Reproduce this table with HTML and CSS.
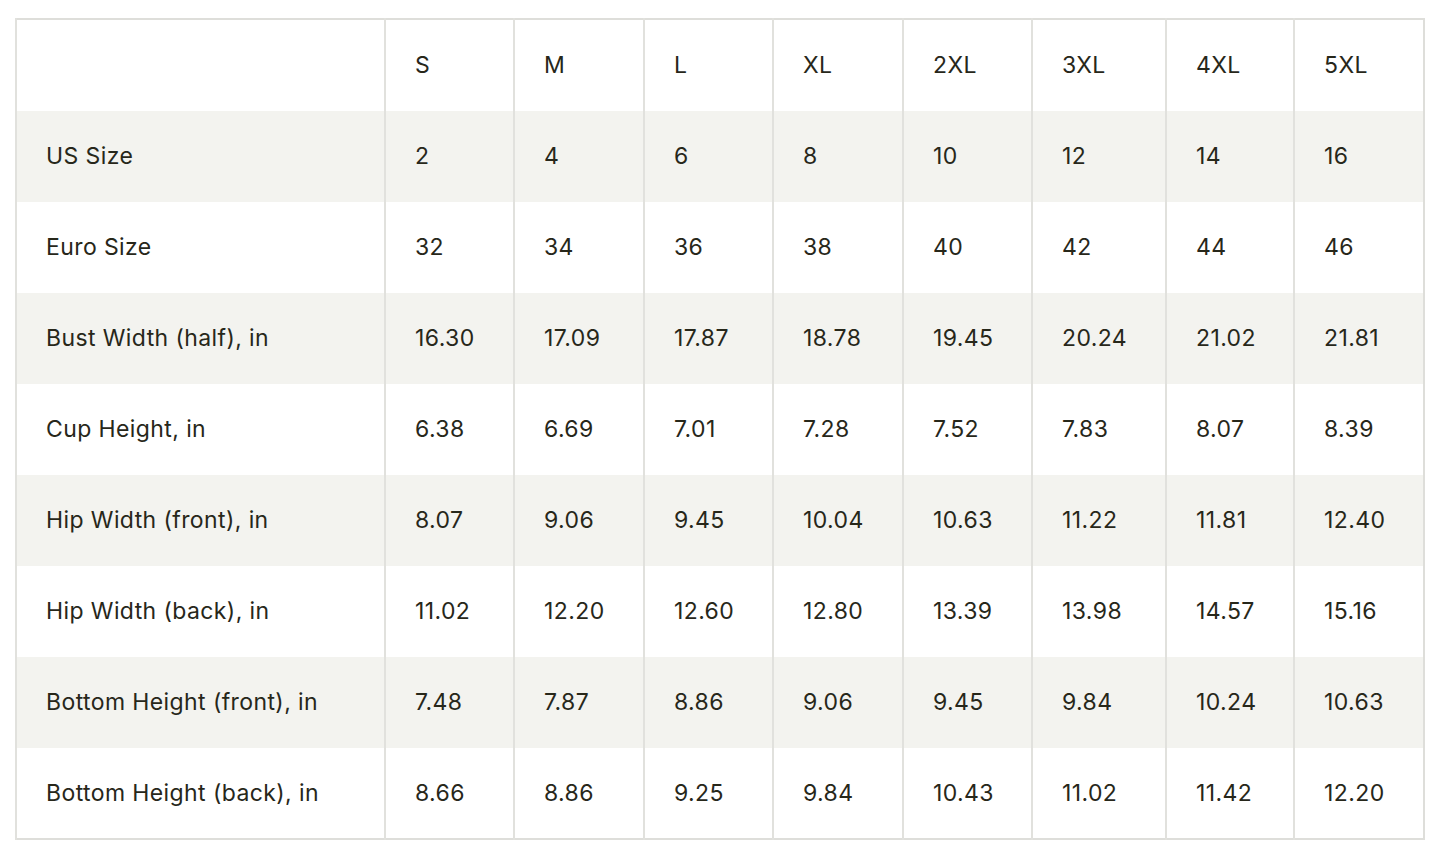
FILE: index.html
```html
<!DOCTYPE html>
<html>
<head>
<meta charset="utf-8">
<link rel="stylesheet" href="styles.css">
</head>
<body>
<table class="size-table">
  <colgroup>
    <col class="c-label"><col class="c-129"><col class="c-130"><col class="c-129"><col class="c-130"><col class="c-129"><col class="c-134"><col class="c-128"><col class="c-130">
  </colgroup>
  <thead>
    <tr><th></th><th>S</th><th>M</th><th>L</th><th>XL</th><th>2XL</th><th>3XL</th><th>4XL</th><th>5XL</th></tr>
  </thead>
  <tbody>
    <tr class="shade"><td>US Size</td><td>2</td><td>4</td><td>6</td><td>8</td><td>10</td><td>12</td><td>14</td><td>16</td></tr>
    <tr><td>Euro Size</td><td>32</td><td>34</td><td>36</td><td>38</td><td>40</td><td>42</td><td>44</td><td>46</td></tr>
    <tr class="shade"><td>Bust Width (half), in</td><td>16.30</td><td>17.09</td><td>17.87</td><td>18.78</td><td>19.45</td><td>20.24</td><td>21.02</td><td>21.81</td></tr>
    <tr><td>Cup Height, in</td><td>6.38</td><td>6.69</td><td>7.01</td><td>7.28</td><td>7.52</td><td>7.83</td><td>8.07</td><td>8.39</td></tr>
    <tr class="shade"><td>Hip Width (front), in</td><td>8.07</td><td>9.06</td><td>9.45</td><td>10.04</td><td>10.63</td><td>11.22</td><td>11.81</td><td>12.40</td></tr>
    <tr><td>Hip Width (back), in</td><td>11.02</td><td>12.20</td><td>12.60</td><td>12.80</td><td>13.39</td><td>13.98</td><td>14.57</td><td>15.16</td></tr>
    <tr class="shade"><td>Bottom Height (front), in</td><td>7.48</td><td>7.87</td><td>8.86</td><td>9.06</td><td>9.45</td><td>9.84</td><td>10.24</td><td>10.63</td></tr>
    <tr><td>Bottom Height (back), in</td><td>8.66</td><td>8.86</td><td>9.25</td><td>9.84</td><td>10.43</td><td>11.02</td><td>11.42</td><td>12.20</td></tr>
  </tbody>
</table>
</body>
</html>
```
FILE: styles.css
```css
html, body {
  margin: 0;
  background: #ffffff;
}
body {
  padding: 18px 0 0 15px;
  font-family: Inter, "Liberation Sans", sans-serif;
  color: #27271a;
}
.size-table {
  width: 1408px;
  table-layout: fixed;
  border-collapse: collapse;
  border: 2px solid #dededa;
}
.c-label { width: 369px; }
.c-128 { width: 128px; }
.c-129 { width: 129px; }
.c-130 { width: 130px; }
.c-134 { width: 134px; }
.size-table th,
.size-table td {
  height: 91px;
  padding: 0 0 0 29px;
  text-align: left;
  vertical-align: middle;
  font-size: 23px;
  letter-spacing: 0.4px;
  font-weight: 400;
  line-height: 1;
  border-left: 2px solid #e1e1dd;
  box-sizing: border-box;
}
.size-table thead th {
  height: 92px;
}
.size-table tr.shade td {
  background: #f3f3ef;
}
```
